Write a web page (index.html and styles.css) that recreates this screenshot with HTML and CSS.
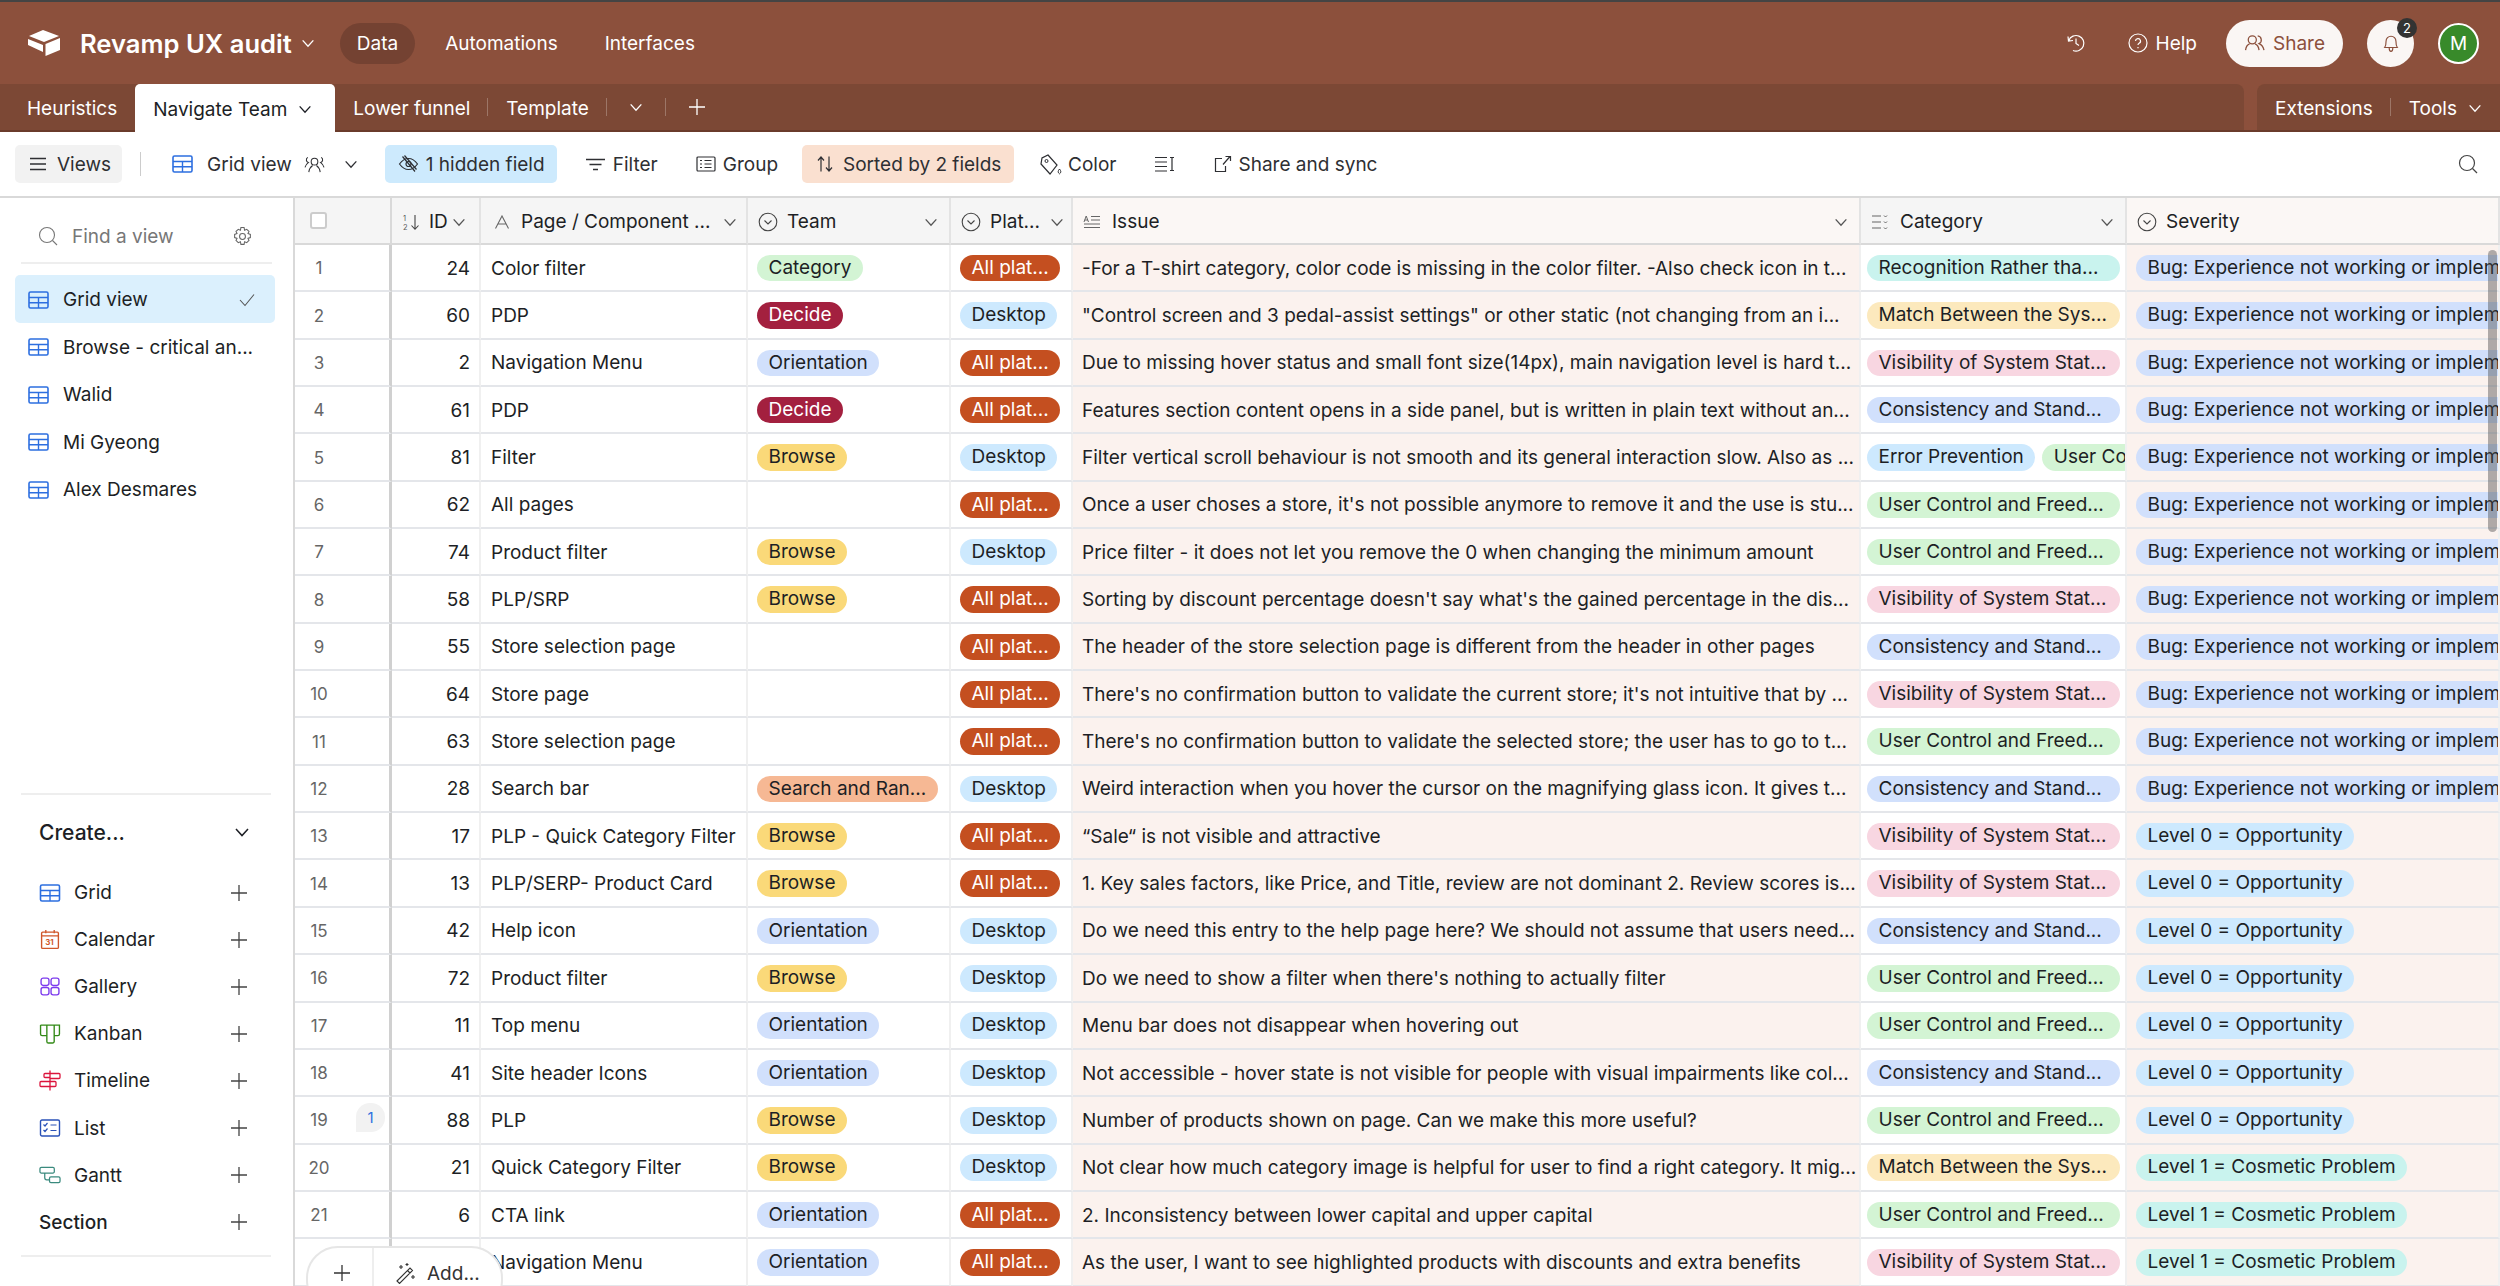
FILE: index.html
```html
<!DOCTYPE html>
<html lang="en">

<head>
    <meta charset="UTF-8">
    <meta name="viewport" content="width=device-width, initial-scale=1.0">
    <title>Revamp UX audit</title>
    <link rel="stylesheet" href="styles.css">
</head>

<body>
    <svg class="sprites" width="0" height="0">
        <symbol id="i-chev" viewBox="0 0 12 12"><path d="M2 4l4 4.4L10 4" fill="none" stroke="currentColor" stroke-width="1"/></symbol>
        <symbol id="i-plus" viewBox="0 0 18 18"><path d="M9 1v16M1 9h16" fill="none" stroke="currentColor" stroke-width="1.3"/></symbol>
        <symbol id="i-grid" viewBox="0 0 21 18"><rect x="1" y="1" width="19" height="16" rx="1.5" fill="none" stroke="currentColor" stroke-width="1.6"/><path d="M1 6.5h19M1 11.8h19M10.5 6.5V17" fill="none" stroke="currentColor" stroke-width="1.4"/></symbol>
        <symbol id="i-select" viewBox="0 0 20 20"><circle cx="10" cy="10" r="8.8" fill="none" stroke="currentColor" stroke-width="1.1"/><path d="M6.500 8.500l3.500 3.500 3.500-3.500" fill="none" stroke="currentColor" stroke-width="1.1"/></symbol>
    </svg>

    <header class="topbar">
        <svg class="logo" viewBox="0 0 32 27" width="32" height="27"><path d="M15 0L1 6l15 6 15-6z" fill="#fff"/><path d="M17.500 14L32 8v12l-14.500 6z" fill="#fff"/><path d="M0 9l15 6v7L0 15z" fill="#fff"/></svg>
        <span class="base-name">Revamp UX audit</span>
        <svg class="base-chev" width="16" height="16"><use href="#i-chev"/></svg>
        <nav class="topnav">
            <a class="topnav-item active">Data</a>
            <a class="topnav-item">Automations</a>
            <a class="topnav-item">Interfaces</a>
        </nav>
        <div class="top-right">
            <svg class="hist" viewBox="0 0 20 20" width="20" height="20"><path d="M2 3.500l.5 4.500 4.500-.5M2.800 7.500A7.800 7.800 0 1 1 7 17.500M10 5.500v5l3 2" fill="none" stroke="currentColor" stroke-width="1.200"/></svg>
            <span class="help"><svg viewBox="0 0 20 20" width="20" height="20"><circle cx="10" cy="10" r="9" fill="none" stroke="currentColor" stroke-width="1.200"/><path d="M7.500 8a2.500 2.500 0 1 1 3.600 2.300c-.8.400-1.100.9-1.100 1.800M10 14v1.300" fill="none" stroke="currentColor" stroke-width="1.200"/></svg>Help</span>
            <button class="share"><svg viewBox="0 0 24 20" width="22" height="18"><circle cx="9" cy="6.500" r="4.500" fill="none" stroke="currentColor" stroke-width="1.400"/><path d="M1.500 18c.5-4 3-6.500 4.500-7M16.500 18c-.5-4-3-6.500-4.500-7M15 2.200a4.500 4.500 0 0 1 1.500 8.500c2.500 1 4.700 3.500 5.500 7.300" fill="none" stroke="currentColor" stroke-width="1.400"/></svg>Share</button>
            <div class="bell"><svg viewBox="0 0 20 22" width="18" height="20"><path d="M3 16c1.500-2 1.500-4 1.500-7a5.500 5.500 0 0 1 11 0c0 3 0 5 1.500 7zM8 16.500c0 5 4 5 4 0" fill="none" stroke="#8c503c" stroke-width="1.300"/></svg><span class="bell-count">2</span></div>
            <div class="avatar">M</div>
        </div>
    </header>

    <div class="tabbar">
        <div class="tabs">
            <a class="tab first">Heuristics</a>
            <a class="tab current">Navigate Team <svg width="16" height="16"><use href="#i-chev"/></svg></a>
            <a class="tab sep">Lower funnel</a>
            <a class="tab sep">Template</a>
            <a class="tab sep tab-chev"><svg width="16" height="16"><use href="#i-chev"/></svg></a>
            <a class="tab tab-plus"><svg width="18" height="18"><use href="#i-plus"/></svg></a>
        </div>
        <div class="tab-tools">
            <a class="tab sep">Extensions</a>
            <a class="tab tools">Tools <svg width="16" height="16"><use href="#i-chev"/></svg></a>
        </div>
    </div>

    <div class="toolbar">
        <button class="tool views"><svg viewBox="0 0 18 16" width="18" height="16"><path d="M1 2.500h16M1 8h16M1 13.500h16" stroke="currentColor" stroke-width="1.400"/></svg>Views</button>
        <span class="tool-div"></span>
        <button class="tool gridview"><svg class="ic-blue" width="21" height="18"><use href="#i-grid"/></svg><span>Grid view</span><svg viewBox="0 0 24 20" width="23" height="19"><circle cx="12" cy="7" r="3.500" fill="none" stroke="currentColor" stroke-width="1.100"/><path d="M6 18c.5-4 2.500-6 4-7M18 18c-.5-4-2.500-6-4-7M5 2.500a3 3 0 0 0 .5 5.500C4 9 2.500 10.500 2 13M19 2.500a3 3 0 0 1-.5 5.500c1.500 1 3 2.500 3.500 5" fill="none" stroke="currentColor" stroke-width="1.100"/></svg><svg class="gv-chev" width="16" height="16"><use href="#i-chev"/></svg></button>
        <button class="tool hidden-f"><svg viewBox="0 0 22 20" width="23" height="20"><path d="M2 10S6 4.500 11 4.500 20 10 20 10 16 15.500 11 15.500 2 10 2 10z" fill="none" stroke="currentColor" stroke-width="1.200"/><circle cx="11" cy="10" r="2.500" fill="none" stroke="currentColor" stroke-width="1.200"/><path d="M5 2.500l12.500 15M7 1.500l12 14" stroke="currentColor" stroke-width="1.200"/></svg>1 hidden field</button>
        <button class="tool t-filter"><svg viewBox="0 0 21 13" width="21" height="13"><path d="M1 1.500h19M4.500 6.500h12M8 11.500h5" stroke="currentColor" stroke-width="1.300"/></svg>Filter</button>
        <button class="tool t-group"><svg viewBox="0 0 20 16" width="20" height="16"><rect x="1" y="1" width="18" height="14" rx="1" fill="none" stroke="currentColor" stroke-width="1.200"/><path d="M4 4.500h2M4 8h2M4 11.500h2M8.500 4.500h7M8.500 8h7M8.500 11.500h7" stroke="currentColor" stroke-width="1.200"/></svg>Group</button>
        <button class="tool sorted"><svg viewBox="0 0 18 16" width="18" height="16"><path d="M5 15.500V1M2 4.500l3-3.500 3 3.500M13 .5V15M10 11.500l3 3.500 3-3.500" fill="none" stroke="currentColor" stroke-width="1.200"/></svg>Sorted by 2 fields</button>
        <button class="tool t-color"><svg viewBox="0 0 23 21" width="23" height="21"><path d="M9 1l9 10-7 9L2 10 3 4z" fill="none" stroke="currentColor" stroke-width="1.200"/><circle cx="7.500" cy="7" r="1.500" fill="none" stroke="currentColor"/><path d="M20.500 15c-1.800 2.200-1.800 3.600 0 4.800 1.800-1.200 1.800-2.600 0-4.800z" fill="none" stroke="currentColor"/></svg>Color</button>
        <button class="tool t-height"><svg viewBox="0 0 21 16" width="21" height="16"><path d="M1 1.500h12M1 6h12M1 10.500h12M1 15h12M18 2v12M16 1.500h4M16 14.500h4" fill="none" stroke="currentColor" stroke-width="1.200"/></svg></button>
        <button class="tool t-share"><svg viewBox="0 0 18 18" width="18" height="18"><path d="M8 3.500H1.500v13h10V11M9 9.500l7-8M11.500 1.500H16.500V6" fill="none" stroke="currentColor" stroke-width="1.200"/></svg>Share and sync</button>
        <svg class="tool-search" viewBox="0 0 20 20" width="20" height="20"><circle cx="9" cy="9" r="7.500" fill="none" stroke="currentColor" stroke-width="1.200"/><path d="M14.500 14.500l4.500 4.500" stroke="currentColor" stroke-width="1.200"/></svg>
    </div>

    <div class="main">
        <aside class="sidebar">
            <div class="find-view">
                <svg viewBox="0 0 20 20" width="20" height="20"><circle cx="9" cy="9" r="7.500" fill="none" stroke="currentColor" stroke-width="1.100"/><path d="M14.500 14.500l4.500 4.500" stroke="currentColor" stroke-width="1.100"/></svg>
                <span>Find a view</span>
                <svg class="gear" viewBox="0 0 20 20" width="21" height="21"><circle cx="10" cy="10" r="2.800" fill="none" stroke="currentColor" stroke-width="1"/><path d="M8.500 1.500h3l.5 2.500 2-.9 2.200 2.100-1 2 2.300.8v3l-2.300.8 1 2-2.200 2.100-2-.9-.5 2.500h-3l-.5-2.500-2 .9-2.200-2.100 1-2-2.300-.8v-3l2.300-.8-1-2L6 3.100l2 .9z" fill="none" stroke="currentColor" stroke-width="1"/></svg>
            </div>
            <ul class="view-list">
                <li class="view selected"><svg width="21" height="18"><use href="#i-grid"/></svg>Grid view<svg class="check" viewBox="0 0 16 14" width="16" height="14"><path d="M1 7l5 5.500L15 1.500" fill="none" stroke="#555" stroke-width="1.100"/></svg></li>
                <li class="view"><svg width="21" height="18"><use href="#i-grid"/></svg>Browse - critical an...</li>
                <li class="view"><svg width="21" height="18"><use href="#i-grid"/></svg>Walid</li>
                <li class="view"><svg width="21" height="18"><use href="#i-grid"/></svg>Mi Gyeong</li>
                <li class="view"><svg width="21" height="18"><use href="#i-grid"/></svg>Alex Desmares</li>
            </ul>
            <div class="create">
                <div class="create-head"><span>Create...</span><svg width="18" height="18"><use href="#i-chev"/></svg></div>
                <ul class="create-list">
                    <li><svg class="c-blue" width="21" height="18"><use href="#i-grid"/></svg><span>Grid</span><svg class="plus" width="18" height="18"><use href="#i-plus"/></svg></li>
                    <li><svg class="c-orange" viewBox="0 0 20 20" width="21" height="21"><rect x="2" y="3" width="16" height="15.500" rx="1" fill="none" stroke="currentColor" stroke-width="1.300"/><path d="M2 6.500h16M6 1v3M14 1v3" fill="none" stroke="currentColor" stroke-width="1.300"/><text x="5.500" y="15.500" font-size="7.500" font-weight="700" fill="currentColor">31</text></svg><span>Calendar</span><svg class="plus" width="18" height="18"><use href="#i-plus"/></svg></li>
                    <li><svg class="c-purple" viewBox="0 0 20 20" width="21" height="21"><rect x="1.500" y="2" width="7.500" height="7" rx="2" fill="none" stroke="currentColor" stroke-width="1.300"/><rect x="11" y="2" width="7.500" height="7" rx="2" fill="none" stroke="currentColor" stroke-width="1.300"/><rect x="1.500" y="11" width="7.500" height="7" rx="2" fill="none" stroke="currentColor" stroke-width="1.300"/><rect x="11" y="11" width="7.500" height="7" rx="2" fill="none" stroke="currentColor" stroke-width="1.300"/></svg><span>Gallery</span><svg class="plus" width="18" height="18"><use href="#i-plus"/></svg></li>
                    <li><svg class="c-green" viewBox="0 0 20 20" width="21" height="21"><path d="M1 2h18v8.500a1.500 1.500 0 0 1-1.500 1.500H14M1 2v8.500A1.500 1.500 0 0 0 2.500 12H7M7 2v15.500A1.500 1.500 0 0 0 8.500 19h4a1.500 1.500 0 0 0 1.500-1.500V2" fill="none" stroke="currentColor" stroke-width="1.300"/></svg><span>Kanban</span><svg class="plus" width="18" height="18"><use href="#i-plus"/></svg></li>
                    <li><svg class="c-red" viewBox="0 0 22 22" width="23" height="23"><path d="M11 1v20M11 4h9a1 1 0 0 1 1 1v3a1 1 0 0 1-1 1h-9M11 12H2a1 1 0 0 0-1 1v3a1 1 0 0 0 1 1h9M11 4H6a1 1 0 0 0-1 1v2a1 1 0 0 0 1 1h5M11 12h5a1 1 0 0 1 1 1v3a1 1 0 0 1-1 1h-5" fill="none" stroke="currentColor" stroke-width="1.300"/></svg><span>Timeline</span><svg class="plus" width="18" height="18"><use href="#i-plus"/></svg></li>
                    <li><svg class="c-navy" viewBox="0 0 21 18" width="21" height="18"><rect x="1" y="1" width="19" height="16" rx="1.500" fill="none" stroke="currentColor" stroke-width="1.400"/><path d="M4 5.500l1.500 1.500L8 4M4 11l1.500 1.500L8 9.500M11 6h6M11 11.500h6" fill="none" stroke="currentColor" stroke-width="1.200"/></svg><span>List</span><svg class="plus" width="18" height="18"><use href="#i-plus"/></svg></li>
                    <li><svg class="c-teal" viewBox="0 0 23 18" width="23" height="18"><rect x="1" y="1" width="15" height="6" rx="1.500" fill="none" stroke="currentColor" stroke-width="1.300"/><rect x="11" y="11" width="11" height="6" rx="1.500" fill="none" stroke="currentColor" stroke-width="1.300"/><path d="M6 7v5a2 2 0 0 0 2 2h3" fill="none" stroke="currentColor" stroke-width="1.300"/></svg><span>Gantt</span><svg class="plus" width="18" height="18"><use href="#i-plus"/></svg></li>
                    <li class="section"><span>Section</span><svg class="plus" width="18" height="18"><use href="#i-plus"/></svg></li>
                </ul>
            </div>
        </aside>

        <section class="grid">
            <div class="row head">
                <div class="cell c-num"><span class="checkbox"></span></div>
                <div class="cell c-id"><svg viewBox="0 0 20 18" width="20" height="18"><text x="1" y="8" font-size="7.500" fill="#555">1</text><text x="1" y="17" font-size="7.500" fill="#555">2</text><path d="M13 2v14M9.500 12.500l3.500 3.800 3.500-3.800" fill="none" stroke="#444" stroke-width="1.100"/></svg><span>ID</span><svg class="hchev" width="16" height="16"><use href="#i-chev"/></svg></div>
                <div class="cell c-page"><svg viewBox="0 0 16 14" width="16" height="14"><path d="M1.500 13.500L8 1 14.500 13.500M4 9h8" fill="none" stroke="#666" stroke-width="1.100"/></svg><span>Page / Component ...</span><svg class="hchev" width="16" height="16"><use href="#i-chev"/></svg></div>
                <div class="cell c-team"><svg width="20" height="20"><use href="#i-select"/></svg><span>Team</span><svg class="hchev" width="16" height="16"><use href="#i-chev"/></svg></div>
                <div class="cell c-plat"><svg width="20" height="20"><use href="#i-select"/></svg><span>Plat...</span><svg class="hchev" width="16" height="16"><use href="#i-chev"/></svg></div>
                <div class="cell c-issue tint"><svg viewBox="0 0 18 14" width="18" height="14"><path d="M1 7l2.200-6L5.500 7M1.700 5h3.100M8 1.500h9M8 5h9M1 9h16M1 12.500h16" fill="none" stroke="#666" stroke-width="1"/></svg><span>Issue</span><svg class="hchev" width="16" height="16"><use href="#i-chev"/></svg></div>
                <div class="cell c-cat"><svg viewBox="0 0 18 16" width="18" height="16"><path d="M1 2h9M1 8h9M1 14h9" stroke="#666" stroke-width="1.100"/><path d="M13 1.500l1.500 1.500L16 1.500M13 7.500l1.500 1.500L16 7.500M13 13.500l1.500 1.500 1.500-1.500" fill="none" stroke="#666"/></svg><span>Category</span><svg class="hchev" width="16" height="16"><use href="#i-chev"/></svg></div>
                <div class="cell c-sev tint"><svg width="20" height="20"><use href="#i-select"/></svg><span>Severity</span></div>
            </div>

            <div class="row"><div class="cell c-num"><span class="num">1</span></div><div class="cell c-id">24</div><div class="cell c-page">Color filter</div><div class="cell c-team"><span class="pill green">Category</span></div><div class="cell c-plat"><span class="pill orange">All plat...</span></div><div class="cell c-issue">-For a T-shirt category, color code is missing in the color filter. -Also check icon in t...</div><div class="cell c-cat"><span class="pill teal wide">Recognition Rather tha...</span></div><div class="cell c-sev"><span class="pill blue">Bug: Experience not working or implem...</span></div></div>
            <div class="row"><div class="cell c-num"><span class="num">2</span></div><div class="cell c-id">60</div><div class="cell c-page">PDP</div><div class="cell c-team"><span class="pill crimson">Decide</span></div><div class="cell c-plat"><span class="pill sky">Desktop</span></div><div class="cell c-issue">"Control screen and 3 pedal-assist settings" or other static (not changing from an i...</div><div class="cell c-cat"><span class="pill sand wide">Match Between the Sys...</span></div><div class="cell c-sev"><span class="pill blue">Bug: Experience not working or implem...</span></div></div>
            <div class="row"><div class="cell c-num"><span class="num">3</span></div><div class="cell c-id">2</div><div class="cell c-page">Navigation Menu</div><div class="cell c-team"><span class="pill blue">Orientation</span></div><div class="cell c-plat"><span class="pill orange">All plat...</span></div><div class="cell c-issue">Due to missing hover status and small font size(14px), main navigation level is hard t...</div><div class="cell c-cat"><span class="pill pink wide">Visibility of System Stat...</span></div><div class="cell c-sev"><span class="pill blue">Bug: Experience not working or implem...</span></div></div>
            <div class="row"><div class="cell c-num"><span class="num">4</span></div><div class="cell c-id">61</div><div class="cell c-page">PDP</div><div class="cell c-team"><span class="pill crimson">Decide</span></div><div class="cell c-plat"><span class="pill orange">All plat...</span></div><div class="cell c-issue">Features section content opens in a side panel, but is written in plain text without an...</div><div class="cell c-cat"><span class="pill blue wide">Consistency and Stand...</span></div><div class="cell c-sev"><span class="pill blue">Bug: Experience not working or implem...</span></div></div>
            <div class="row"><div class="cell c-num"><span class="num">5</span></div><div class="cell c-id">81</div><div class="cell c-page">Filter</div><div class="cell c-team"><span class="pill yellow">Browse</span></div><div class="cell c-plat"><span class="pill sky">Desktop</span></div><div class="cell c-issue">Filter vertical scroll behaviour is not smooth and its general interaction slow. Also as ...</div><div class="cell c-cat"><span class="pill sky">Error Prevention</span><span class="pill green">User Co</span></div><div class="cell c-sev"><span class="pill blue">Bug: Experience not working or implem...</span></div></div>
            <div class="row"><div class="cell c-num"><span class="num">6</span></div><div class="cell c-id">62</div><div class="cell c-page">All pages</div><div class="cell c-team"></div><div class="cell c-plat"><span class="pill orange">All plat...</span></div><div class="cell c-issue">Once a user choses a store, it's not possible anymore to remove it and the use is stu...</div><div class="cell c-cat"><span class="pill green wide">User Control and Freed...</span></div><div class="cell c-sev"><span class="pill blue">Bug: Experience not working or implem...</span></div></div>
            <div class="row"><div class="cell c-num"><span class="num">7</span></div><div class="cell c-id">74</div><div class="cell c-page">Product filter</div><div class="cell c-team"><span class="pill yellow">Browse</span></div><div class="cell c-plat"><span class="pill sky">Desktop</span></div><div class="cell c-issue">Price filter - it does not let you remove the 0 when changing the minimum amount</div><div class="cell c-cat"><span class="pill green wide">User Control and Freed...</span></div><div class="cell c-sev"><span class="pill blue">Bug: Experience not working or implem...</span></div></div>
            <div class="row"><div class="cell c-num"><span class="num">8</span></div><div class="cell c-id">58</div><div class="cell c-page">PLP/SRP</div><div class="cell c-team"><span class="pill yellow">Browse</span></div><div class="cell c-plat"><span class="pill orange">All plat...</span></div><div class="cell c-issue">Sorting by discount percentage doesn't say what's the gained percentage in the dis...</div><div class="cell c-cat"><span class="pill pink wide">Visibility of System Stat...</span></div><div class="cell c-sev"><span class="pill blue">Bug: Experience not working or implem...</span></div></div>
            <div class="row"><div class="cell c-num"><span class="num">9</span></div><div class="cell c-id">55</div><div class="cell c-page">Store selection page</div><div class="cell c-team"></div><div class="cell c-plat"><span class="pill orange">All plat...</span></div><div class="cell c-issue">The header of the store selection page is different from the header in other pages</div><div class="cell c-cat"><span class="pill blue wide">Consistency and Stand...</span></div><div class="cell c-sev"><span class="pill blue">Bug: Experience not working or implem...</span></div></div>
            <div class="row"><div class="cell c-num"><span class="num">10</span></div><div class="cell c-id">64</div><div class="cell c-page">Store page</div><div class="cell c-team"></div><div class="cell c-plat"><span class="pill orange">All plat...</span></div><div class="cell c-issue">There's no confirmation button to validate the current store; it's not intuitive that by ...</div><div class="cell c-cat"><span class="pill pink wide">Visibility of System Stat...</span></div><div class="cell c-sev"><span class="pill blue">Bug: Experience not working or implem...</span></div></div>
            <div class="row"><div class="cell c-num"><span class="num">11</span></div><div class="cell c-id">63</div><div class="cell c-page">Store selection page</div><div class="cell c-team"></div><div class="cell c-plat"><span class="pill orange">All plat...</span></div><div class="cell c-issue">There's no confirmation button to validate the selected store; the user has to go to t...</div><div class="cell c-cat"><span class="pill green wide">User Control and Freed...</span></div><div class="cell c-sev"><span class="pill blue">Bug: Experience not working or implem...</span></div></div>
            <div class="row"><div class="cell c-num"><span class="num">12</span></div><div class="cell c-id">28</div><div class="cell c-page">Search bar</div><div class="cell c-team"><span class="pill peach">Search and Ran...</span></div><div class="cell c-plat"><span class="pill sky">Desktop</span></div><div class="cell c-issue">Weird interaction when you hover the cursor on the magnifying glass icon. It gives t...</div><div class="cell c-cat"><span class="pill blue wide">Consistency and Stand...</span></div><div class="cell c-sev"><span class="pill blue">Bug: Experience not working or implem...</span></div></div>
            <div class="row"><div class="cell c-num"><span class="num">13</span></div><div class="cell c-id">17</div><div class="cell c-page">PLP - Quick Category Filter</div><div class="cell c-team"><span class="pill yellow">Browse</span></div><div class="cell c-plat"><span class="pill orange">All plat...</span></div><div class="cell c-issue">“Sale“ is not visible and attractive</div><div class="cell c-cat"><span class="pill pink wide">Visibility of System Stat...</span></div><div class="cell c-sev"><span class="pill sky">Level 0 = Opportunity</span></div></div>
            <div class="row"><div class="cell c-num"><span class="num">14</span></div><div class="cell c-id">13</div><div class="cell c-page">PLP/SERP- Product Card</div><div class="cell c-team"><span class="pill yellow">Browse</span></div><div class="cell c-plat"><span class="pill orange">All plat...</span></div><div class="cell c-issue">1. Key sales factors, like Price, and Title, review are not dominant 2. Review scores is...</div><div class="cell c-cat"><span class="pill pink wide">Visibility of System Stat...</span></div><div class="cell c-sev"><span class="pill sky">Level 0 = Opportunity</span></div></div>
            <div class="row"><div class="cell c-num"><span class="num">15</span></div><div class="cell c-id">42</div><div class="cell c-page">Help icon</div><div class="cell c-team"><span class="pill blue">Orientation</span></div><div class="cell c-plat"><span class="pill sky">Desktop</span></div><div class="cell c-issue">Do we need this entry to the help page here? We should not assume that users need...</div><div class="cell c-cat"><span class="pill blue wide">Consistency and Stand...</span></div><div class="cell c-sev"><span class="pill sky">Level 0 = Opportunity</span></div></div>
            <div class="row"><div class="cell c-num"><span class="num">16</span></div><div class="cell c-id">72</div><div class="cell c-page">Product filter</div><div class="cell c-team"><span class="pill yellow">Browse</span></div><div class="cell c-plat"><span class="pill sky">Desktop</span></div><div class="cell c-issue">Do we need to show a filter when there's nothing to actually filter</div><div class="cell c-cat"><span class="pill green wide">User Control and Freed...</span></div><div class="cell c-sev"><span class="pill sky">Level 0 = Opportunity</span></div></div>
            <div class="row"><div class="cell c-num"><span class="num">17</span></div><div class="cell c-id">11</div><div class="cell c-page">Top menu</div><div class="cell c-team"><span class="pill blue">Orientation</span></div><div class="cell c-plat"><span class="pill sky">Desktop</span></div><div class="cell c-issue">Menu bar does not disappear when hovering out</div><div class="cell c-cat"><span class="pill green wide">User Control and Freed...</span></div><div class="cell c-sev"><span class="pill sky">Level 0 = Opportunity</span></div></div>
            <div class="row"><div class="cell c-num"><span class="num">18</span></div><div class="cell c-id">41</div><div class="cell c-page">Site header Icons</div><div class="cell c-team"><span class="pill blue">Orientation</span></div><div class="cell c-plat"><span class="pill sky">Desktop</span></div><div class="cell c-issue">Not accessible - hover state is not visible for people with visual impairments like col...</div><div class="cell c-cat"><span class="pill blue wide">Consistency and Stand...</span></div><div class="cell c-sev"><span class="pill sky">Level 0 = Opportunity</span></div></div>
            <div class="row"><div class="cell c-num"><span class="num">19</span><span class="comment">1</span></div><div class="cell c-id">88</div><div class="cell c-page">PLP</div><div class="cell c-team"><span class="pill yellow">Browse</span></div><div class="cell c-plat"><span class="pill sky">Desktop</span></div><div class="cell c-issue">Number of products shown on page. Can we make this more useful?</div><div class="cell c-cat"><span class="pill green wide">User Control and Freed...</span></div><div class="cell c-sev"><span class="pill sky">Level 0 = Opportunity</span></div></div>
            <div class="row"><div class="cell c-num"><span class="num">20</span></div><div class="cell c-id">21</div><div class="cell c-page">Quick Category Filter</div><div class="cell c-team"><span class="pill yellow">Browse</span></div><div class="cell c-plat"><span class="pill sky">Desktop</span></div><div class="cell c-issue">Not clear how much category image is helpful for user to find a right category. It mig...</div><div class="cell c-cat"><span class="pill sand wide">Match Between the Sys...</span></div><div class="cell c-sev"><span class="pill teal">Level 1 = Cosmetic Problem</span></div></div>
            <div class="row"><div class="cell c-num"><span class="num">21</span></div><div class="cell c-id">6</div><div class="cell c-page">CTA link</div><div class="cell c-team"><span class="pill blue">Orientation</span></div><div class="cell c-plat"><span class="pill orange">All plat...</span></div><div class="cell c-issue">2. Inconsistency between lower capital and upper capital</div><div class="cell c-cat"><span class="pill green wide">User Control and Freed...</span></div><div class="cell c-sev"><span class="pill teal">Level 1 = Cosmetic Problem</span></div></div>
            <div class="row"><div class="cell c-num"></div><div class="cell c-id"></div><div class="cell c-page">Navigation Menu</div><div class="cell c-team"><span class="pill blue">Orientation</span></div><div class="cell c-plat"><span class="pill orange">All plat...</span></div><div class="cell c-issue">As the user, I want to see highlighted products with discounts and extra benefits</div><div class="cell c-cat"><span class="pill pink wide">Visibility of System Stat...</span></div><div class="cell c-sev"><span class="pill teal">Level 1 = Cosmetic Problem</span></div></div>

            <div class="scrollbar"></div>
            <div class="add-float">
                <span class="add-plus"><svg width="18" height="18"><use href="#i-plus"/></svg></span>
                <span class="add-more"><svg viewBox="0 0 22 22" width="22" height="22"><path d="M3 19L16 6l2.500 2.500L5.500 21.500zM13.500 8.500L16 11M7 3v4M5 5h4M19 13v4M17 15h4M13 1v3M11.500 2.500h3" fill="none" stroke="currentColor" stroke-width="1.100"/></svg>Add...</span>
            </div>
        </section>
    </div>
</body>

</html>
```

FILE: styles.css
```css
* {
    margin: 0;
    padding: 0;
    box-sizing: border-box;
}

html,
body {
    height: 1286px;
    overflow: hidden;
}

body {
    width: 2500px;
    background-color: #fff;
    color: #1d1f25;
    font-family: Inter, "Liberation Sans", sans-serif;
    font-size: 19px;
}

.sprites {
    position: absolute;
}

svg {
    flex-shrink: 0;
    display: block;
}

ul {
    list-style-type: none;
}

button {
    font: inherit;
    color: inherit;
    border: none;
    background: none;
}

/* top bar */
.topbar {
    height: 84px;
    border-top: 2px solid #444;
    background-color: #8c503c;
    color: #fff;
    display: flex;
    align-items: center;
    padding-left: 28px;
}

.base-name {
    font-size: 25.6px;
    font-weight: 600;
    margin-left: 20px;
    margin-right: 8px;
}

.topnav {
    display: flex;
    align-items: center;
    gap: 13px;
    margin-left: 24px;
}

.topnav-item {
    height: 41px;
    line-height: 41px;
    padding: 0 17px;
    border-radius: 21px;
}

.topnav-item.active {
    background-color: #744232;
}

.top-right {
    margin-left: auto;
    display: flex;
    align-items: center;
    padding-right: 21px;
}

.hist {
    margin-right: 42px;
}

.help {
    display: flex;
    align-items: center;
    gap: 8px;
    margin-right: 29px;
}

.share {
    height: 47px;
    width: 117px;
    border-radius: 24px;
    background-color: #faf6f4;
    color: #8c503c;
    display: flex;
    align-items: center;
    justify-content: center;
    gap: 7px;
    margin-right: 24px;
}

.bell {
    position: relative;
    width: 47px;
    height: 47px;
    margin-right: 24px;
    border-radius: 24px;
    background-color: #faf6f4;
    display: flex;
    align-items: center;
    justify-content: center;
}

.bell-count {
    position: absolute;
    top: -2px;
    right: -3px;
    width: 20px;
    height: 20px;
    border-radius: 10px;
    background-color: #333;
    color: #fff;
    font-size: 13px;
    line-height: 20px;
    text-align: center;
}

.avatar {
    width: 41px;
    height: 41px;
    border-radius: 21px;
    border: 2px solid #fff;
    background-color: #388a2a;
    color: #fff;
    text-align: center;
    line-height: 37px;
}

/* tabs */
.tabbar {
    height: 48px;
    display: flex;
    gap: 13px;
    background-color: #8c503c;
    border-bottom: 2px solid #6a3b2b;
}

.tabs,
.tab-tools {
    display: flex;
    align-items: center;
    background-color: #7c4835;
}

.tabs {
    flex: 1;
    border-top-right-radius: 8px;
}

.tab-tools {
    width: 243px;
    border-top-left-radius: 8px;
}

.tab {
    color: #fff;
    height: 46px;
    display: flex;
    align-items: center;
    padding: 2px 18px 0;
    position: relative;
}

.tab.first {
    padding: 2px 18px 0 27px;
}

.tab.current {
    background-color: #fff;
    color: #1d1f25;
    border-radius: 5px 5px 0 0;
    padding: 2px 22px 0 18px;
    height: 48px;
    margin-bottom: -2px;
    gap: 10px;
}

.tab.sep::after {
    content: "";
    position: absolute;
    right: 0;
    top: 14px;
    height: 18px;
    width: 1px;
    background-color: rgba(255, 255, 255, 0.25);
}

.tab-chev {
    width: 59px;
    justify-content: center;
    padding: 0;
}

.tab-plus {
    padding: 0 22px;
}

.tools {
    gap: 10px;
    padding-right: 0;
}

/* view toolbar */
.toolbar {
    height: 66px;
    border-bottom: 2px solid #d9d9d9;
    display: flex;
    align-items: center;
    padding: 0 22px 0 15px;
}

.tool {
    height: 38px;
    border-radius: 5px;
    display: flex;
    align-items: center;
    gap: 7px;
    color: #2e2f33;
    white-space: nowrap;
}

.views {
    background-color: #f2f2f2;
    padding-left: 14px;
    width: 107px;
    gap: 10px;
}

.tool-div {
    width: 1px;
    height: 24px;
    background-color: #ccc;
    margin-left: 18px;
}

.gridview {
    gap: 12px;
    margin-left: 31px;
}

.gridview span {
    margin-left: 2px;
    margin-right: -1px;
}

.gv-chev {
    margin-left: 5px;
}

.ic-blue {
    color: #2d6fe0;
}

.hidden-f {
    background-color: #cdeafd;
    width: 172px;
    padding-left: 12px;
    margin-left: 26px;
    gap: 6px;
}

.t-filter {
    margin-left: 28px;
}

.t-group {
    margin-left: 38px;
}

.sorted {
    background-color: #fae0d0;
    width: 212px;
    padding-left: 14px;
    gap: 9px;
    margin-left: 24px;
}

.t-color {
    margin-left: 25px;
    gap: 6px;
}

.t-height {
    margin-left: 38px;
}

.t-share {
    margin-left: 39px;
    gap: 6px;
}

.tool-search {
    margin-left: auto;
    color: #444;
}

/* sidebar */
.main {
    display: flex;
    height: 1088px;
}

.sidebar {
    width: 295px;
    border-right: 2px solid #d9d9d9;
    display: flex;
    flex-direction: column;
    flex-shrink: 0;
}

.find-view {
    margin: 0 21px;
    height: 66px;
    padding: 12px 19px 0 17px;
    border-bottom: 2px solid #eee;
    display: flex;
    align-items: center;
    gap: 14px;
    color: #777;
}

.gear {
    margin-left: auto;
    color: #666;
}

.view-list {
    padding: 11px 18px 0 15px;
}

.view {
    height: 47.5px;
    display: flex;
    align-items: center;
    padding: 2px 13px 0;
    gap: 14px;
}

.view svg {
    color: #2d6fe0;
}

.view.selected {
    background-color: #dbf0fd;
    border-radius: 5px;
}

.view .check {
    margin-left: auto;
    margin-right: 7px;
}

.create {
    margin: auto 22px 29px 21px;
    border-top: 2px solid #eee;
    border-bottom: 2px solid #eee;
    padding: 0 18px;
    height: 464px;
}

.create-head {
    height: 74px;
    display: flex;
    align-items: center;
    justify-content: space-between;
    font-size: 21px;
    font-weight: 500;
}

.create-head svg {
    margin-right: 2px;
}

.create-list li {
    height: 47.1px;
    display: flex;
    align-items: center;
    gap: 13px;
}

.create-list .section {
    font-weight: 500;
}

.create-list svg:first-child {
    width: 22px;
}

.plus {
    margin-left: auto;
    color: #444;
    margin-right: 5px;
}

.c-blue { color: #2d6fe0; }
.c-orange { color: #d0572a; }
.c-purple { color: #7c3bed; }
.c-green { color: #338a17; }
.c-red { color: #dc143c; }
.c-navy { color: #2a52b8; }
.c-teal { color: #3a8a7e; }

/* grid */
.grid {
    flex: 1;
    position: relative;
    overflow: hidden;
}

.row {
    display: grid;
    grid-template-columns: 97px 89px 267px 203px 122px 788px 266px 373px;
    height: 47.35px;
}

.row.head {
    height: 47px;
}

.cell {
    border-right: 2px solid #f0f0f0;
    border-bottom: 2px solid #e4e6ea;
    display: flex;
    align-items: center;
    padding: 1px 9px 0;
    overflow: hidden;
    white-space: nowrap;
}

.row.head .cell {
    background-color: #f5f5f5;
    border-right: 2px solid #e3e3e3;
    border-bottom: 2px solid #d9d9d9;
    gap: 9px;
    padding: 2px 10px 0;
}

.row.head .tint {
    background-color: #fbf7f5;
}

.row.head .hchev {
    margin-left: auto;
    color: #555;
}

.row.head .c-id {
    gap: 7px;
    padding-right: 0;
    justify-content: flex-start;
}

.row.head .c-id .hchev {
    margin-left: -4px;
}

.row.head .c-page {
    gap: 11px;
    padding: 2px 14px 0 13px;
}

.row.head .c-issue,
.row.head .c-cat {
    gap: 11px;
}

.row.head .c-num {
    padding: 0 0 0 15px;
    border-right-color: #d9d9d9;
}

.row.head svg {
    color: #444;
}

.c-num {
    color: #666;
    font-size: 17px;
    border-right: 3px solid #d0d0d0;
    position: relative;
    padding-left: 5px;
}

.num {
    width: 38px;
    text-align: center;
}

.checkbox {
    width: 17px;
    height: 17px;
    border: 2px solid #ccc;
    border-radius: 3px;
    background-color: #fff;
}

.comment {
    position: absolute;
    right: 4px;
    top: 6px;
    width: 29px;
    height: 29px;
    background-color: #f2f2f2;
    border-radius: 14px 14px 14px 0;
    color: #2d6fe0;
    font-size: 15px;
    line-height: 29px;
    text-align: center;
}

.c-id {
    justify-content: flex-end;
    padding-right: 9px;
}

.c-page {
    padding-left: 10px;
}

.row .c-issue,
.row .c-sev {
    background-color: #fbf2ee;
}

.pill {
    height: 26.5px;
    line-height: 26px;
    border-radius: 13.5px;
    padding: 0 11.5px;
    white-space: nowrap;
    flex-shrink: 0;
}

.c-cat {
    padding-left: 6px;
}

.c-cat .wide {
    width: 253px;
}

.c-cat .pill + .pill {
    margin-left: 7px;
}

.green { background-color: #d3f4d4; }
.orange { background-color: #c44f20; color: #fff; }
.teal { background-color: #c9f3ee; }
.blue { background-color: #d1e0fc; }
.crimson { background-color: #a3203f; color: #fff; }
.sky { background-color: #cde9fe; }
.sand { background-color: #fce9bd; }
.yellow { background-color: #fad979; }
.pink { background-color: #f8d6e1; }
.peach { background-color: #f6b894; }

.scrollbar {
    position: absolute;
    top: 52px;
    right: 3px;
    width: 9px;
    height: 282px;
    border-radius: 5px;
    background-color: rgba(70, 70, 70, 0.42);
}

.add-float {
    position: absolute;
    left: 11px;
    top: 1048px;
    width: 197px;
    height: 66px;
    background-color: #fff;
    border: 2px solid #e6e6e6;
    border-radius: 32px;
    display: flex;
}

.add-plus {
    width: 66px;
    border-right: 2px solid #eee;
    display: flex;
    justify-content: center;
    padding: 16px 0 0 3px;
    color: #333;
}

.add-more {
    display: flex;
    align-items: flex-start;
    gap: 11px;
    padding: 14px 0 0 20px;
    color: #333;
}
```
